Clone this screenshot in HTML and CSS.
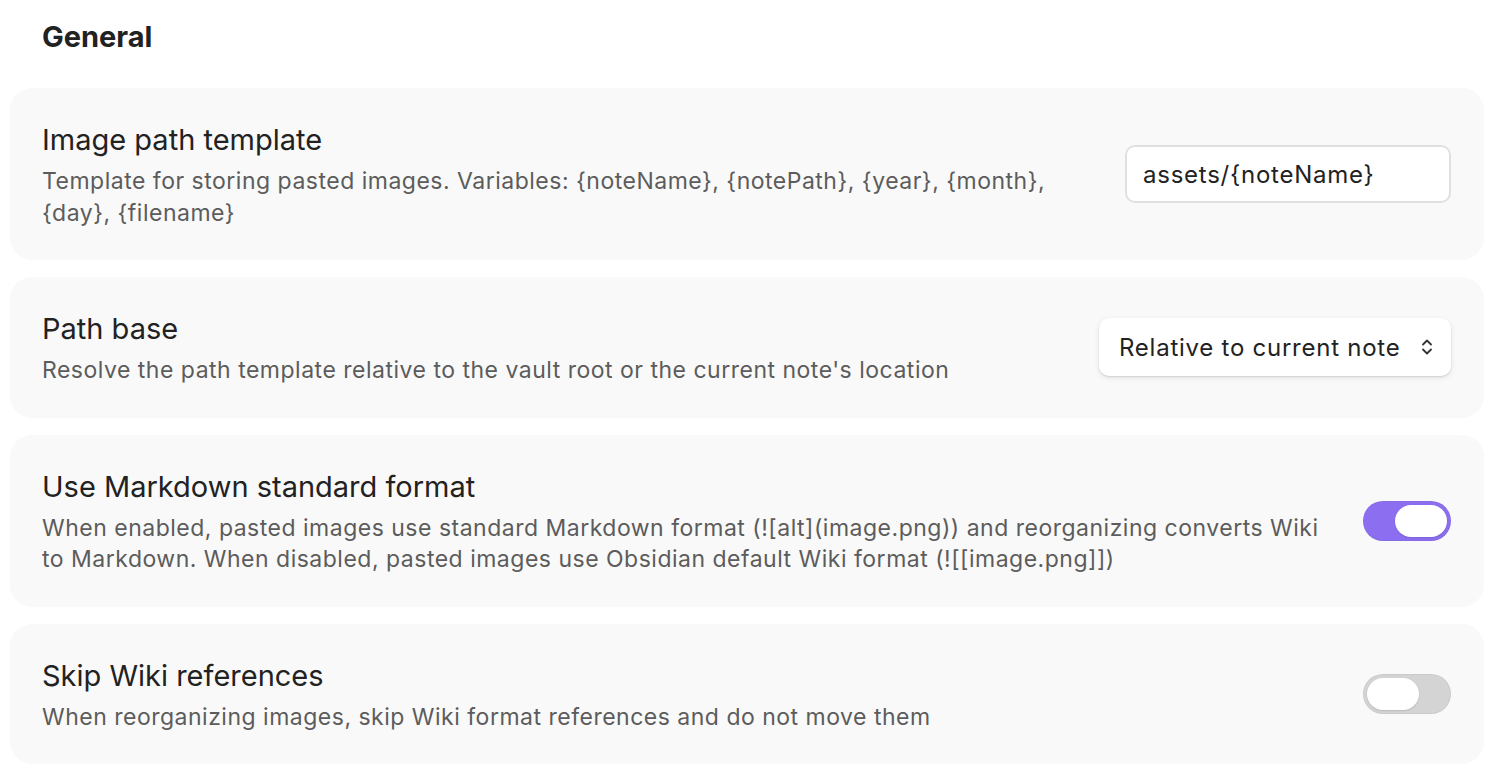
FILE: index.html
```html
<!DOCTYPE html>
<html lang="en">
  <head>
    <meta charset="UTF-8" />
    <meta name="viewport" content="width=device-width, initial-scale=1.0" />
    <title>Settings</title>
    <link rel="stylesheet" href="styles.css">
  </head>
  <body>
    <div class="settings">
      <h2 class="section-heading">General</h2>

      <div class="setting-item">
        <div class="setting-info">
          <div class="setting-name">Image path template</div>
          <div class="setting-desc">
            Template for storing pasted images. Variables: {noteName}, {notePath}, {year}, {month}, {day}, {filename}
          </div>
        </div>
        <div class="setting-control">
          <input class="text-input" type="text" value="assets/{noteName}" />
        </div>
      </div>

      <div class="setting-item">
        <div class="setting-info">
          <div class="setting-name">Path base</div>
          <div class="setting-desc">
            Resolve the path template relative to the vault root or the current note's location
          </div>
        </div>
        <div class="setting-control">
          <div class="dropdown">
            <span>Relative to current note</span>
            <svg class="dropdown-arrow" width="12" height="20" viewBox="0 0 12 20">
              <path d="M2 7.5 L6 3.5 L10 7.5" />
              <path d="M2 12.5 L6 16.5 L10 12.5" />
            </svg>
          </div>
        </div>
      </div>

      <div class="setting-item">
        <div class="setting-info">
          <div class="setting-name">Use Markdown standard format</div>
          <div class="setting-desc">
            When enabled, pasted images use standard Markdown format (![alt](image.png)) and reorganizing converts Wiki to Markdown. When disabled, pasted images use Obsidian default Wiki format (![[image.png]])
          </div>
        </div>
        <div class="setting-control">
          <div class="toggle is-enabled"><div class="toggle-knob"></div></div>
        </div>
      </div>

      <div class="setting-item">
        <div class="setting-info">
          <div class="setting-name">Skip Wiki references</div>
          <div class="setting-desc">
            When reorganizing images, skip Wiki format references and do not move them
          </div>
        </div>
        <div class="setting-control">
          <div class="toggle"><div class="toggle-knob"></div></div>
        </div>
      </div>
    </div>
  </body>
</html>
```

FILE: styles.css
```css
body {
  font-family: Inter, "Noto Sans", sans-serif;
  background-color: #ffffff;
  margin: 0;
  color: #222;
}
.settings {
  padding: 0 22px 0 10px;
}
.section-heading {
  margin: 0;
  padding: 19px 0 0 32px;
  height: 88px;
  box-sizing: border-box;
  font-size: 29px;
  font-weight: 700;
  line-height: 36px;
  color: #222;
}
.setting-item {
  display: flex;
  align-items: center;
  background-color: #f9f9f9;
  border-radius: 22px;
  padding: 34px 33px 31px 32px;
  margin-bottom: 17px;
  gap: 36px;
}
.setting-info {
  flex: 1;
}
.setting-name {
  font-size: 29px;
  line-height: 36px;
  color: #222;
  margin-bottom: 8px;
}
.setting-desc {
  font-size: 23px;
  letter-spacing: 0.5px;
  line-height: 31.5px;
  color: #5c5c5c;
}
.setting-control {
  display: flex;
  align-items: center;
  margin-top: -3px;
}
.text-input {
  width: 326px;
  height: 58px;
  box-sizing: border-box;
  border: 2px solid #e0e0e0;
  border-radius: 10px;
  background: #fff;
  padding: 0 16px;
  font-family: inherit;
  font-size: 24px;
  letter-spacing: 0.75px;
  color: #222;
  outline: none;
}
.dropdown {
  display: flex;
  align-items: center;
  justify-content: space-between;
  width: 352px;
  height: 58px;
  box-sizing: border-box;
  padding: 0 18px 0 20px;
  background: #fff;
  border-radius: 10px;
  box-shadow: 0 1px 2px rgba(0, 0, 0, 0.12), 0 2px 6px rgba(0, 0, 0, 0.08);
  font-size: 24px;
  letter-spacing: 0.75px;
  color: #222;
}
.dropdown-arrow path {
  fill: none;
  stroke: #333;
  stroke-width: 1.8;
  stroke-linecap: round;
  stroke-linejoin: round;
}
.toggle {
  width: 88px;
  height: 40px;
  box-sizing: border-box;
  border-radius: 20px;
  background: #d4d4d4;
  padding: 4px;
  display: flex;
  box-shadow: inset 0 0 0 1px rgba(0, 0, 0, 0.04);
}
.toggle-knob {
  width: 52px;
  height: 32px;
  border-radius: 16px;
  background: #fff;
  box-shadow: 0 1px 2px rgba(0, 0, 0, 0.12);
}
.toggle.is-enabled {
  background: #8c6ff0;
  justify-content: flex-end;
}
```
